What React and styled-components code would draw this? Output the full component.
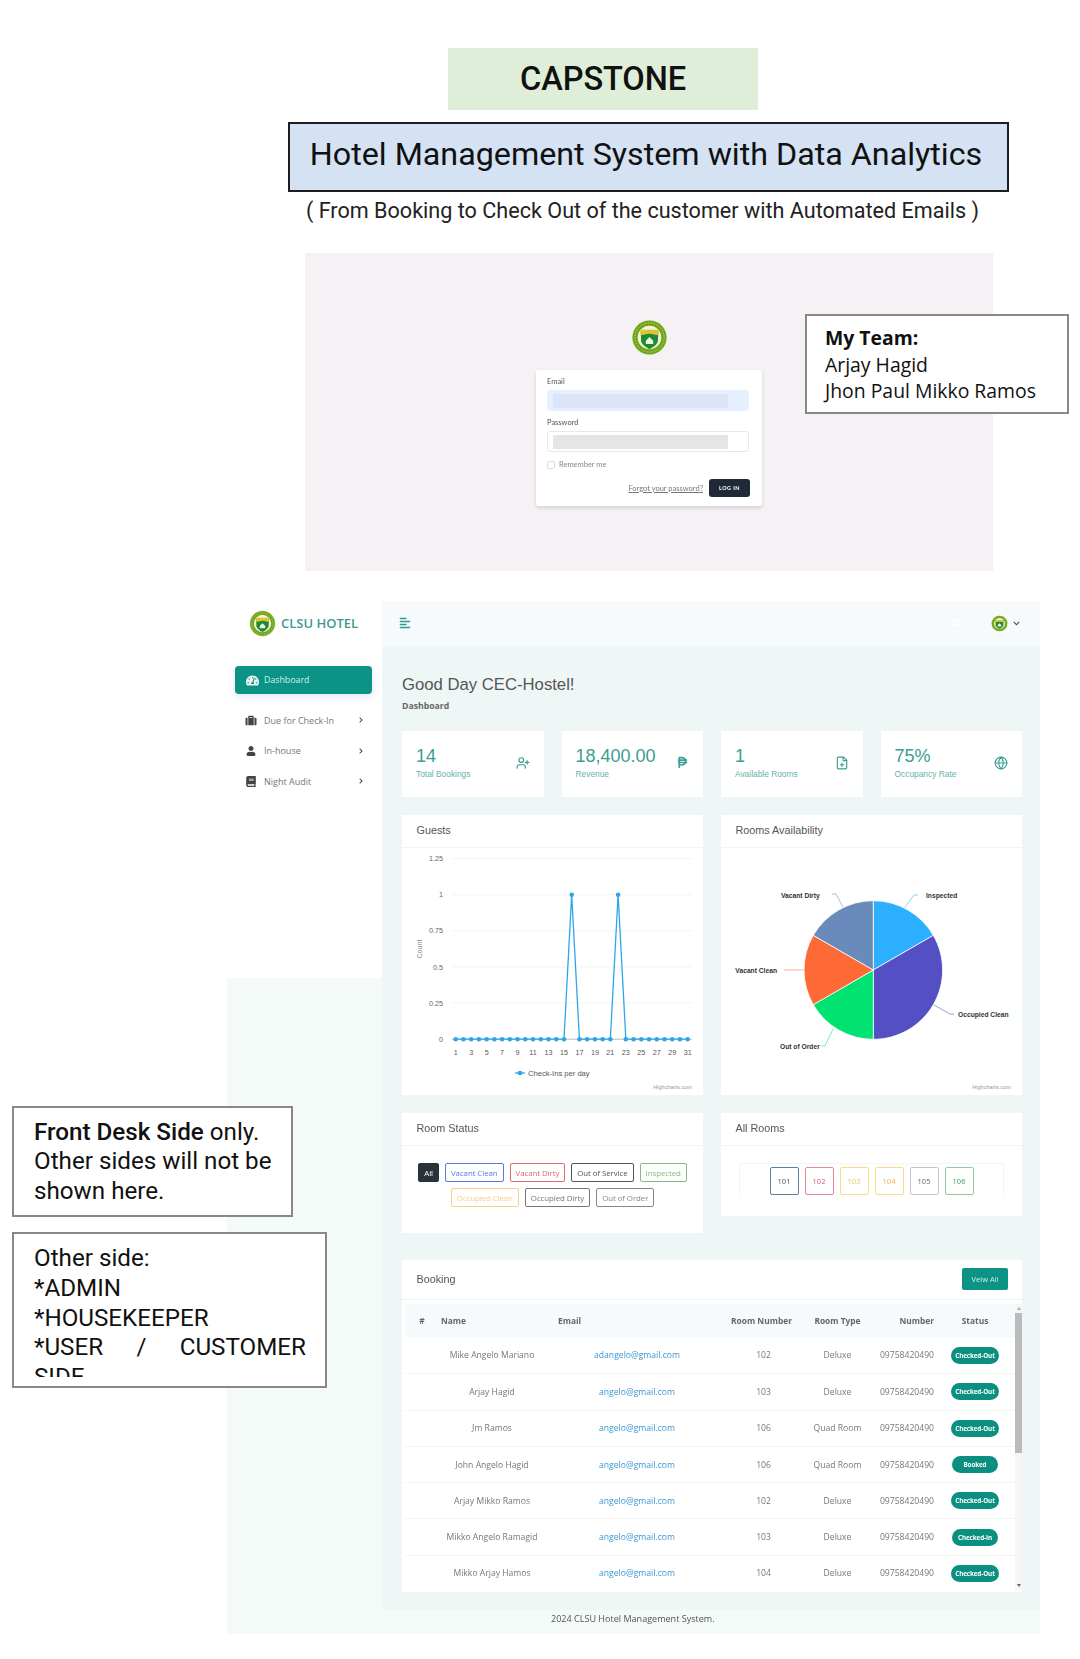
import React from 'react';
import styled, { createGlobalStyle } from 'styled-components';
import { FaTachometerAlt, FaSuitcase, FaUser, FaBook, FaChevronRight, FaChevronDown, FaAlignLeft, FaSearch } from 'react-icons/fa';
import { FaPesoSign as Peso } from 'react-icons/fa6';
import { UserPlus, FilePlus, Globe } from 'lucide-react';

const Global = createGlobalStyle`
  html, body { margin: 0; padding: 0; background: #fff; }
  * { box-sizing: border-box; }
`;
const Page = styled.div`
  position: relative; width: 1080px; height: 1659px; overflow: hidden; background: #fff;
  padding-top: 48px; font-family: Roboto, "Liberation Sans", sans-serif; color: #111;
  display: flex; flex-direction: column;
`;
const Capstone = styled.div`
  margin-left: 448px; width: 310px; height: 62px; background: #dfeed8;
  display: flex; align-items: center; justify-content: center; padding-bottom: 1px;
  font-size: 32.6px; font-weight: 500; letter-spacing: -.1px;
`;
const TitleBox = styled.div`
  margin: 12px 0 0 288px; width: 721px; height: 70px; background: #d5e2f4; border: 2px solid #1d1d22;
  display: flex; align-items: center; justify-content: center; padding: 0 5px 6px 0; font-size: 32.25px;
`;
const Subtitle = styled.div`
  margin-left: 288px; width: 709px; height: 36px; display: flex; align-items: center; justify-content: center;
  font-size: 21.6px; color: #222;
`;
const LoginPanel = styled.section`
  margin: 25px 0 0 305px; width: 688px; height: 318px; background: #f6f1f5; padding-top: 66px;
  display: flex; flex-direction: column; align-items: center; gap: 14px; filter: blur(.6px);
  font-family: Lato, sans-serif; color: #555;
`;
const LoginCard = styled.div`
  width: 226px; height: 136px; background: #fff; border-radius: 3px; box-shadow: 0 2px 4px rgba(0,0,0,.14);
  padding: 8px 12px 0 11px; display: flex; flex-direction: column; font-size: 7.5px;
`;
const FieldLabel = styled.div` height: 12px; line-height: 8px; `;
const Field = styled.div`
  width: 202px; height: 21px; border-radius: 3px; padding: 3px 5px; margin-bottom: 8px;
  background: ${p => p.$filled ? '#e6effd' : '#fff'}; border: 1px solid ${p => p.$filled ? '#e6effd' : '#e8e8e8'};
`;
const FieldFill = styled.div` width: 175px; height: 14px; background: ${p => p.$c}; `;
const RememberRow = styled.div` display: flex; align-items: center; gap: 4px; color: #8a8a8a; `;
const CheckBox = styled.span` width: 8px; height: 8px; border: 1px solid #ddd; border-radius: 2px; `;
const LoginActions = styled.div` display: flex; justify-content: flex-end; align-items: center; gap: 6px; margin-top: 10px; `;
const Forgot = styled.span` color: #777; text-decoration: underline; `;
const LoginBtn = styled.div`
  width: 41px; height: 18px; background: #1f2937; color: #fff; border-radius: 3px; font-weight: 700; font-size: 5.5px;
  letter-spacing: .4px; display: flex; align-items: center; justify-content: center;
`;

const Note = styled.aside`
  position: absolute; background: #fff; border: 2px solid #888; color: #111;
  left: ${p => p.$x}px; top: ${p => p.$y}px; width: ${p => p.$w}px; height: ${p => p.$h}px;
  padding: ${p => p.$pad}; font-size: ${p => p.$fs}px; line-height: ${p => p.$lh}px;
  font-family: ${p => p.$font || 'Roboto'}, sans-serif;
`;
const NoteClip = styled.div` height: 133px; overflow: hidden; `;
const JustifiedLine = styled.div` text-align: justify; text-align-last: justify; `;
const Strong = styled.strong` font-weight: 500; `;
const Bolder = styled.strong` font-weight: 700; `;

const Shell = styled.div`
  margin: 30px 0 0 227px; width: 813px; height: 1033px; display: flex;
  font-family: "Open Sans", sans-serif; filter: blur(.55px);
`;
const Sidebar = styled.nav` width: 155px; display: flex; flex-direction: column; `;
const SideTop = styled.div` height: 377px; background: #fff; padding-top: 9px; `;
const SideFill = styled.div` flex: 1; background: #f4faf8; `;
const Brand = styled.div`
  display: flex; align-items: center; gap: 5px; padding-left: 22px; height: 26px;
  color: #3f9a92; font-size: 13px; font-weight: 600; white-space: nowrap;
`;
const NavActive = styled.div`
  margin: 30px 0 11px 8px; width: 137px; height: 28px; background: #0b9486; border-radius: 4px; color: #d4efe9;
  display: flex; align-items: center; gap: 5px; padding-left: 11px; font-size: 8.8px;
  box-shadow: 0 3px 8px rgba(80,90,220,.16);
`;
const NavItem = styled.div`
  height: 30.5px; padding-left: 18px; display: flex; align-items: center; gap: 7px; font-size: 9px; color: #777;
  & > svg:first-child { color: #444; width: 12px; }
`;
const NavText = styled.span` width: 87px; white-space: nowrap; `;
const Main = styled.main` flex: 1; display: flex; flex-direction: column; min-width: 0; `;
const TopBar = styled.header`
  height: 46px; background: #f6fafd; display: flex; align-items: center; justify-content: space-between;
  padding: 0 20px 2px 17px; color: #2f9c90;
`;
const TopRight = styled.div` display: flex; align-items: center; gap: 5px; color: #444; `;
const SearchGlyph = styled.span` color: #fff; margin-right: 24px; display: flex; `;
const Content = styled.div`
  background: #eff6f6; padding: 28px 18px 18px 20px; display: flex; flex-direction: column; height: 963px;
  font-family: "Liberation Sans", sans-serif;
`;
const Greeting = styled.h1` margin: 0; font-size: 16.7px; font-weight: 400; line-height: 20px; color: #555; `;
const Crumb = styled.div` margin: 6px 0 20px; font-size: 8.7px; line-height: 10px; font-weight: 700; color: #666; font-family: "Open Sans", sans-serif; `;
const StatGrid = styled.div` display: grid; grid-template-columns: repeat(4, 1fr); gap: 18px; `;
const StatCard = styled.div`
  height: 66px; background: #fff; padding: 15px 14px 0; display: flex; justify-content: space-between; align-items: flex-start; color: #3a9e93;
`;
const StatValue = styled.div` font-size: 18px; line-height: 20px; color: #3a9e93; `;
const StatLabel = styled.div` font-size: 8.4px; line-height: 12px; margin-top: 2px; color: #65b3aa; white-space: nowrap; `;
const StatIcon = styled.span` display: flex; margin-top: 10px; `;
const TwoCols = styled.div` display: grid; grid-template-columns: repeat(2, 1fr); gap: 18px; margin-top: ${p => p.$mt}px; align-items: start; `;
const Panel = styled.div` background: #fff; height: ${p => p.$h}px; display: flex; flex-direction: column; `;
const PanelHead = styled.div`
  height: ${p => p.$h || 33}px; flex: none; border-bottom: 1px solid #f2f4f4; padding: 0 14px 2px 14.5px; display: flex; align-items: center; justify-content: space-between;
  font-size: 10.8px; color: #555;
`;
const ChartSvg = styled.svg` display: block; font-family: "Liberation Sans", sans-serif; `;
const StatusWrap = styled.div` padding: 17px 14px; display: flex; flex-wrap: wrap; justify-content: center; gap: 6px 6px; `;
const StatusBtn = styled.span`
  height: 19px; padding: 0 5px; border: 1px solid ${p => p.$c}; border-radius: 2px; display: flex; align-items: center; font-size: 7.9px;
  font-family: "Open Sans", sans-serif; color: ${p => p.$dark ? '#fff' : p.$c}; background: ${p => p.$dark ? '#2c3338' : '#fff'};
  white-space: nowrap; letter-spacing: -.08px;
`;
const RoomsFrame = styled.div`
  margin: 17px 0 0 18px; width: 265px; height: 35px; border: 1px solid #f4f4f4; border-bottom: 0; display: flex; justify-content: center; align-items: flex-start; padding-top: 3px; gap: 6px;
`;
const RoomTile = styled.span`
  width: 29px; height: 28px; border: 1px solid ${p => p.$c}; border-radius: 2px; display: flex; align-items: center; justify-content: center;
  font-family: "Open Sans", sans-serif; font-size: 7.5px; color: ${p => p.$t};
`;
const ViewAll = styled.span`
  width: 46px; height: 22px; background: #0b9486; color: #d6f0ea; border-radius: 2px; font-size: 7.5px; font-family: "Open Sans", sans-serif;
  display: flex; align-items: center; justify-content: center;
`;
const BookingPanel = styled(Panel)` margin-top: 27px; height: 332px; `;
const TableWrap = styled.div` display: flex; margin: 4px 0 0 3px; flex: 1; min-height: 0; `;
const Table = styled.div` width: 610px; font-family: "Open Sans", sans-serif; `;
const cols = '28px 118px 172px 77px 75px 63px 74px 3px';
const HeadRow = styled.div`
  height: 33px; background: #f6fafd; display: grid; grid-template-columns: ${cols}; align-items: center; font-size: 8.4px; font-weight: 700; color: #666;
`;
const Row = styled.div`
  height: 36.3px; display: grid; grid-template-columns: ${cols}; align-items: center; font-size: 8.6px; color: #777;
  border-top: ${p => p.$first ? 0 : 1}px solid #f2f4f4;
`;
const Cell = styled.div`
  text-align: ${p => p.$a || 'center'}; padding-right: ${p => p.$pr || 0}px; padding-left: ${p => p.$pl || 0}px; color: ${p => p.$c || 'inherit'}; white-space: nowrap; min-width: 0;
`;
const Badge = styled.span`
  display: inline-flex; align-items: center; justify-content: center; height: 17px; padding: 0 ${p => p.$pad}px; background: #0b8f80; color: #fff;
  border-radius: 9px; font-size: 6.3px; font-weight: 700; white-space: nowrap; letter-spacing: -.1px;
`;
const Scrollbar = styled.div` width: 7px; height: 286px; background: #f6f6f6; position: relative; padding-top: 9px; `;
const Thumb = styled.div` width: 7px; height: 140px; background: #bbb; `;
const ScrollArrow = styled.span`
  position: absolute; left: 1.5px; ${p => p.$up ? 'top: 3px;' : 'bottom: 3px;'}
  border-left: 2px solid transparent; border-right: 2px solid transparent;
  ${p => p.$up ? 'border-bottom: 3px solid #aaa;' : 'border-top: 3px solid #666;'}
`;
const Footer = styled.footer`
  height: 24px; background: #f4faf8; padding: 0 0 8px 169px; display: flex; align-items: center; font-size: 9.05px; color: #555;
`;

function Logo({ size }) {
  return (
    <svg width={size} height={size} viewBox="0 0 40 40" style={{ flex: 'none' }}>
      <circle cx="20" cy="20" r="20" fill="#eef6e6" />
      <circle cx="20" cy="20" r="18.5" fill="#6fa51e" />
      <circle cx="20" cy="20" r="15.8" fill="none" stroke="#d9d35a" strokeWidth="1" strokeDasharray="1.5 1.5" />
      <circle cx="20" cy="20" r="12.8" fill="#f4f3d6" />
      <path d="M10.500 13h19v3l-.500 8c-1 4-5 6.500-9 8.500-4-2-8-4.500-9-8.500z" fill="#1c8a30" />
      <path d="M10.500 11.500h19v5.500c-3 1-6-1-9.500-1s-6.500 2-9.500 1z" fill="#dcc437" />
      <path d="M16 27h8v-3.500l-4-4-4 4z" fill="#eaf3e4" />
    </svg>
  );
}

const stats = [
  ['14', 'Total Bookings', <UserPlus size={14} strokeWidth={2} />],
  ['18,400.00', 'Revenue', <Peso size={13} />],
  ['1', 'Available Rooms', <FilePlus size={14} strokeWidth={2} />],
  ['75%', 'Occupancy Rate', <Globe size={14} strokeWidth={2} />],
];
const statuses = [
  ['All', '#2c3338', true], ['Vacant Clean', '#5a78e0'], ['Vacant Dirty', '#dd6b72'], ['Out of Service', '#555'], ['Inspected', '#84bd78'],
  ['Occupied Clean', '#f6cf8a'], ['Occupied Dirty', '#777'], ['Out of Order', '#888'],
];
const rooms = [
  ['101', '#5c7f9f', '#557'], ['102', '#e28b92', '#d0606a'], ['103', '#f7dc8e', '#ecc15e'], ['104', '#f7dc8e', '#ecb04e'], ['105', '#c4c6ca', '#666'], ['106', '#8fcb9f', '#3f9a60'],
];
const bookings = [
  ['Mike Angelo Mariano', 'adangelo@gmail.com', '102', 'Deluxe', 'Checked-Out'],
  ['Arjay Hagid', 'angelo@gmail.com', '103', 'Deluxe', 'Checked-Out'],
  ['Jm Ramos', 'angelo@gmail.com', '106', 'Quad Room', 'Checked-Out'],
  ['John Angelo Hagid', 'angelo@gmail.com', '106', 'Quad Room', 'Booked'],
  ['Arjay Mikko Ramos', 'angelo@gmail.com', '102', 'Deluxe', 'Checked-Out'],
  ['Mikko Angelo Ramagid', 'angelo@gmail.com', '103', 'Deluxe', 'Checked-In'],
  ['Mikko Arjay Hamos', 'angelo@gmail.com', '104', 'Deluxe', 'Checked-Out'],
];

function LineChart() {
  const y0 = 191.2, step = 36.1, x0 = 53.7, dx = 7.733;
  const ticks = ['0', '0.25', '0.5', '0.75', '1', '1.25'];
  const pts = Array.from({ length: 31 }, (_, i) => {
    const day = i + 1;
    return [x0 + i * dx, day === 16 || day === 22 ? y0 - 4 * step : y0];
  });
  return (
    <ChartSvg width="301" height="247" viewBox="0 0 301 247">
      {ticks.map((t, i) => (
        <g key={t}>
          <line x1="50" x2="290" y1={y0 - i * step} y2={y0 - i * step} stroke={i === 0 ? '#bdbdbd' : '#f3f3f3'} />
          <text x="41" y={y0 - i * step + 2.5} textAnchor="end" fontSize="7.2" fill="#666">{t}</text>
        </g>
      ))}
      <text transform="translate(19.5 101) rotate(-90)" textAnchor="middle" fontSize="7.2" fill="#888">Count</text>
      <polyline points={pts.map(p => p.join(',')).join(' ')} fill="none" stroke="#2fa4e7" strokeWidth="1.3" />
      {pts.map(([x, y], i) => <circle key={i} cx={x} cy={y} r="2.3" fill="#2fa4e7" />)}
      {pts.map(([x], i) => i % 2 === 0 && (
        <text key={i} x={x} y={206.5} textAnchor="middle" fontSize="7.2" fill="#555">{i + 1}</text>
      ))}
      <line x1="113" x2="123" y1="225" y2="225" stroke="#2fa4e7" strokeWidth="1.3" />
      <circle cx="118" cy="225" r="2.3" fill="#2fa4e7" />
      <text x="126" y="227.5" fontSize="7.6" fill="#555">Check-Ins per day</text>
      <text x="290" y="241" textAnchor="end" fontSize="5.6" fill="#999">Highcharts.com</text>
    </ChartSvg>
  );
}

const CX = 152.3, CY = 122;
function polar(a, r = 69.3) {
  const t = (a - 90) * Math.PI / 180;
  return [CX + r * Math.cos(t), CY + r * Math.sin(t)];
}
const slices = [
  [0, 60, '#2caffe'], [60, 180, '#544fc5'], [180, 240, '#00e272'], [240, 300, '#fe6a35'], [300, 360, '#6b8abc'],
];
const pieLabels = [
  ['Inspected', 205, 49.5, 'start', '#2caffe', [[182, 62], [193, 47], [197, 47]]],
  ['Occupied Clean', 237, 168.5, 'start', '#544fc5', [[213, 157], [229, 166], [233, 166]]],
  ['Out of Order', 59, 200.5, 'start', '#00e272', [[112, 181], [104, 198], [100, 198]]],
  ['Vacant Clean', 56, 125, 'end', '#fe6a35', [[83, 122], [63, 122]]],
  ['Vacant Dirty', 60, 49.5, 'start', '#6b8abc', [[123, 61], [115, 46], [111, 46]]],
];

function PieChart() {
  return (
    <ChartSvg width="301" height="247" viewBox="0 0 301 247">
      {pieLabels.map(([name, x, y, anchor, color, line]) => (
        <g key={name}>
          <polyline points={line.map(p => p.join(',')).join(' ')} fill="none" stroke={color} strokeOpacity=".55" strokeWidth="1" />
          <text x={x} y={y} textAnchor={anchor} fontSize="6.7" fontWeight="700" fill="#333">{name}</text>
        </g>
      ))}
      {slices.map(([a, b, c]) => {
        const [x1, y1] = polar(a), [x2, y2] = polar(b);
        return <path key={a} d={`M${CX} ${CY}L${x1} ${y1}A69.3 69.3 0 0 1 ${x2} ${y2}Z`} fill={c} stroke="#fff" strokeWidth=".8" />;
      })}
      <text x="290" y="241" textAnchor="end" fontSize="5.6" fill="#999">Highcharts.com</text>
    </ChartSvg>
  );
}

export default function App() {
  return (
    <Page>
      <Global />
      <Capstone>CAPSTONE</Capstone>
      <TitleBox>Hotel Management System with Data Analytics</TitleBox>
      <Subtitle>( From Booking to Check Out of the customer with Automated Emails )</Subtitle>
      <LoginPanel>
        <Logo size={37} />
        <LoginCard>
          <FieldLabel>Email</FieldLabel>
          <Field $filled><FieldFill $c="#dce5f7" /></Field>
          <FieldLabel>Password</FieldLabel>
          <Field><FieldFill $c="#e5e5e5" /></Field>
          <RememberRow><CheckBox />Remember me</RememberRow>
          <LoginActions><Forgot>Forgot your password?</Forgot><LoginBtn>LOG IN</LoginBtn></LoginActions>
        </LoginCard>
      </LoginPanel>
      <Shell>
        <Sidebar>
          <SideTop>
            <Brand><Logo size={27} />CLSU HOTEL</Brand>
            <NavActive><FaTachometerAlt size={13} color="#e8f5f2" />Dashboard</NavActive>
            <NavItem><FaSuitcase size={11} /><NavText>Due for Check-In</NavText><FaChevronRight size={6} color="#444" /></NavItem>
            <NavItem><FaUser size={10} /><NavText>In-house</NavText><FaChevronRight size={6} color="#444" /></NavItem>
            <NavItem><FaBook size={11} /><NavText>Night Audit</NavText><FaChevronRight size={6} color="#444" /></NavItem>
          </SideTop>
          <SideFill />
        </Sidebar>
        <Main>
          <TopBar>
            <FaAlignLeft size={12} />
            <TopRight>
              <SearchGlyph><FaSearch size={9} /></SearchGlyph>
              <Logo size={17} />
              <FaChevronDown size={7} />
            </TopRight>
          </TopBar>
          <Content>
            <Greeting>Good Day CEC-Hostel!</Greeting>
            <Crumb>Dashboard</Crumb>
            <StatGrid>
              {stats.map(([v, l, icon]) => (
                <StatCard key={l}>
                  <div><StatValue>{v}</StatValue><StatLabel>{l}</StatLabel></div>
                  <StatIcon>{icon}</StatIcon>
                </StatCard>
              ))}
            </StatGrid>
            <TwoCols $mt={18}>
              <Panel $h={280}><PanelHead>Guests</PanelHead><LineChart /></Panel>
              <Panel $h={280}><PanelHead>Rooms Availability</PanelHead><PieChart /></Panel>
            </TwoCols>
            <TwoCols $mt={18}>
              <Panel $h={120}>
                <PanelHead>Room Status</PanelHead>
                <StatusWrap>
                  {statuses.map(([n, c, d]) => <StatusBtn key={n} $c={c} $dark={d}>{n}</StatusBtn>)}
                </StatusWrap>
              </Panel>
              <Panel $h={103}>
                <PanelHead>All Rooms</PanelHead>
                <RoomsFrame>
                  {rooms.map(([n, c, t]) => <RoomTile key={n} $c={c} $t={t}>{n}</RoomTile>)}
                </RoomsFrame>
              </Panel>
            </TwoCols>
            <BookingPanel>
              <PanelHead $h={40}>Booking<ViewAll>Veiw All</ViewAll></PanelHead>
              <TableWrap>
                <Table>
                  <HeadRow>
                    <Cell $pl={6}>#</Cell><Cell $a="left" $pl={8}>Name</Cell><Cell $a="left" $pl={7}>Email</Cell>
                    <Cell>Room Number</Cell><Cell>Room Type</Cell><Cell $a="right" $pr={4}>Number</Cell><Cell>Status</Cell><Cell />
                  </HeadRow>
                  {bookings.map(([name, mail, room, type, st], i) => (
                    <Row key={name} $first={i === 0}>
                      <Cell /><Cell>{name}</Cell><Cell $c="#3b97d3">{mail}</Cell><Cell $pl={4}>{room}</Cell><Cell>{type}</Cell>
                      <Cell $a="right" $pr={4}>09758420490</Cell>
                      <Cell><Badge $pad={st === 'Checked-Out' ? 4 : st === 'Booked' ? 11 : 6}>{st}</Badge></Cell><Cell />
                    </Row>
                  ))}
                </Table>
                <Scrollbar><ScrollArrow $up /><Thumb /><ScrollArrow /></Scrollbar>
              </TableWrap>
            </BookingPanel>
          </Content>
          <Footer>2024 CLSU Hotel Management System.</Footer>
        </Main>
      </Shell>
      <Note $x={805} $y={314} $w={264} $h={100} $pad="9px 0 0 18px" $fs={19.4} $lh={26.7} $font='"Open Sans"'>
        <Bolder>My Team:</Bolder><br />Arjay Hagid<br />Jhon Paul Mikko Ramos
      </Note>
      <Note $x={12} $y={1106} $w={281} $h={111} $pad="9.5px 5px 0 20px" $fs={24.2} $lh={29.8}>
        <Strong>Front Desk Side</Strong> only.<br />Other sides will not be<br />shown here.
      </Note>
      <Note $x={12} $y={1232} $w={315} $h={156} $pad="10px 19px 0 20px" $fs={24.2} $lh={29.8}>
        <NoteClip>
          Other side:<br />*ADMIN<br />*HOUSEKEEPER
          <JustifiedLine>*USER / CUSTOMER</JustifiedLine>
          SIDE
        </NoteClip>
      </Note>
    </Page>
  );
}
